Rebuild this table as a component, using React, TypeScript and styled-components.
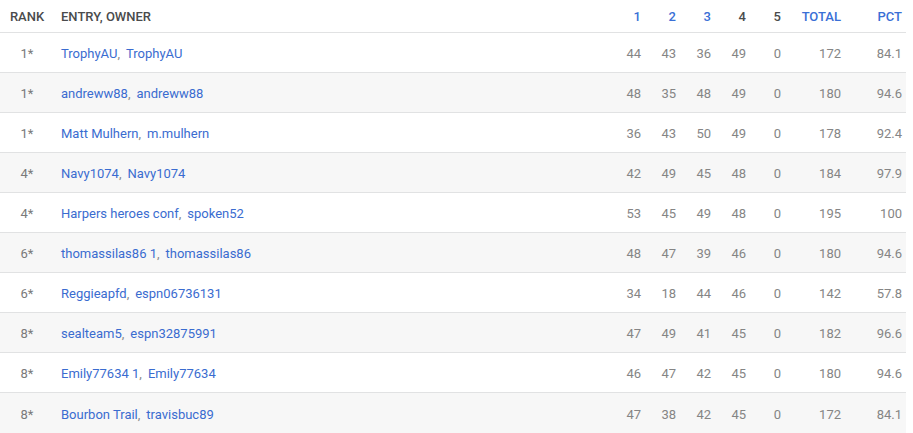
import React from 'react'
import styled, { createGlobalStyle } from 'styled-components'

const GlobalStyle = createGlobalStyle`
  *, *::before, *::after {
    box-sizing: border-box;
  }
  body {
    margin: 0;
    background: #fff;
    font-family: Roboto, "Liberation Sans", sans-serif;
  }
`

const cols = '54px 1fr repeat(5, 35px) 60px 61px'

const Table = styled.div`
  width: 906px;
`

const HeadRow = styled.div`
  display: grid;
  grid-template-columns: ${cols};
  padding-right: 4px;
  height: 33px;
  align-items: center;
  border-bottom: 1px solid #e1e2e3;
  font-size: 13px;
  font-weight: 500;
  text-transform: uppercase;
  color: #48494a;
`

const HeadCell = styled.div<{ $align?: 'left' | 'center' | 'right'; $sortable?: boolean }>`
  text-align: ${p => p.$align || 'right'};
  color: ${p => (p.$sortable ? '#3a6fd6' : '#4a4b4c')};
  padding-left: ${p => (p.$align === 'left' ? '7px' : '0')};
  white-space: nowrap;
`

const Row = styled.div<{ $alt: boolean }>`
  display: grid;
  grid-template-columns: ${cols};
  padding: 2px 4px 0 0;
  height: 40px;
  align-items: center;
  border-bottom: 1px solid #e1e2e3;
  background: ${p => (p.$alt ? '#f7f7f7' : '#fff')};
  font-size: 13px;
  color: #858585;
  &:last-child {
    border-bottom: none;
  }
`

const Rank = styled.div`
  text-align: center;
  color: #7a7a7a;
`

const Entry = styled.div`
  padding-left: 7px;
  white-space: nowrap;
  color: #8a8a8a;
`

const Link = styled.a`
  color: #3a6cd0;
  text-decoration: none;
  cursor: pointer;
`

const Owner = styled(Link)`
  margin-left: 6px;
`

const Num = styled.div`
  text-align: right;
`

interface Standing {
  rank: string
  entry: string
  owner: string
  scores: number[]
  total: number
  pct: string
}

const standings: Standing[] = [
  { rank: '1*', entry: 'TrophyAU', owner: 'TrophyAU', scores: [44, 43, 36, 49, 0], total: 172, pct: '84.1' },
  { rank: '1*', entry: 'andreww88', owner: 'andreww88', scores: [48, 35, 48, 49, 0], total: 180, pct: '94.6' },
  { rank: '1*', entry: 'Matt Mulhern', owner: 'm.mulhern', scores: [36, 43, 50, 49, 0], total: 178, pct: '92.4' },
  { rank: '4*', entry: 'Navy1074', owner: 'Navy1074', scores: [42, 49, 45, 48, 0], total: 184, pct: '97.9' },
  { rank: '4*', entry: 'Harpers heroes conf', owner: 'spoken52', scores: [53, 45, 49, 48, 0], total: 195, pct: '100' },
  { rank: '6*', entry: 'thomassilas86 1', owner: 'thomassilas86', scores: [48, 47, 39, 46, 0], total: 180, pct: '94.6' },
  { rank: '6*', entry: 'Reggieapfd', owner: 'espn06736131', scores: [34, 18, 44, 46, 0], total: 142, pct: '57.8' },
  { rank: '8*', entry: 'sealteam5', owner: 'espn32875991', scores: [47, 49, 41, 45, 0], total: 182, pct: '96.6' },
  { rank: '8*', entry: 'Emily77634 1', owner: 'Emily77634', scores: [46, 47, 42, 45, 0], total: 180, pct: '94.6' },
  { rank: '8*', entry: 'Bourbon Trail', owner: 'travisbuc89', scores: [47, 38, 42, 45, 0], total: 172, pct: '84.1' },
]

const App = () => {
  return (
    <>
      <GlobalStyle />
      <Table>
        <HeadRow>
          <HeadCell $align="center">Rank</HeadCell>
          <HeadCell $align="left">Entry, Owner</HeadCell>
          <HeadCell $sortable>1</HeadCell>
          <HeadCell $sortable>2</HeadCell>
          <HeadCell $sortable>3</HeadCell>
          <HeadCell>4</HeadCell>
          <HeadCell>5</HeadCell>
          <HeadCell $sortable>Total</HeadCell>
          <HeadCell $sortable>Pct</HeadCell>
        </HeadRow>
        {standings.map((s, i) => (
          <Row key={i} $alt={i % 2 === 1}>
            <Rank>{s.rank}</Rank>
            <Entry>
              <Link>{s.entry}</Link>,<Owner>{s.owner}</Owner>
            </Entry>
            {s.scores.map((n, j) => (
              <Num key={j}>{n}</Num>
            ))}
            <Num>{s.total}</Num>
            <Num>{s.pct}</Num>
          </Row>
        ))}
      </Table>
    </>
  )
}

export default App
